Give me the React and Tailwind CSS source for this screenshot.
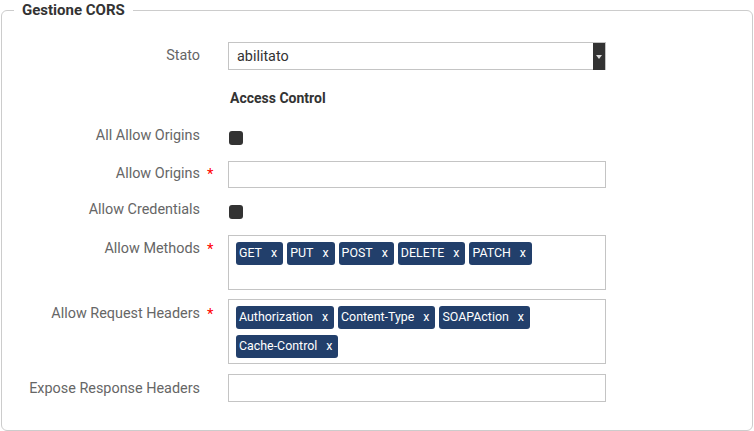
import { useState } from 'react'

const methods = ['GET', 'PUT', 'POST', 'DELETE', 'PATCH']
const reqHeaders = ['Authorization', 'Content-Type', 'SOAPAction', 'Cache-Control']

function Label({ text, required, className = '' }) {
  return (
    <div className={`flex w-[214px] shrink-0 ${className}`}>
      <span className="w-[186px] text-right text-[14.4px] leading-5 text-[#666]">{text}</span>
      {required && <span className="ml-[7px] text-[15px] leading-5 text-[#f00]">*</span>}
    </div>
  )
}

function Tag({ children }) {
  return (
    <span className="flex h-[23px] items-center rounded-[3px] bg-[#223f6b] pl-[3px] pr-[6px] text-[12.4px] text-white">
      {children}
      <span className="ml-[9px]">x</span>
    </span>
  )
}

function Checkbox({ checked, onChange }) {
  return (
    <button
      type="button"
      onClick={onChange}
      className="ml-px mt-[7px] h-[14px] w-[14px] rounded-[3px] bg-[#333]"
      aria-pressed={checked}
    />
  )
}

export default function App() {
  const [allOrigins, setAllOrigins] = useState(false)
  const [credentials, setCredentials] = useState(false)

  return (
    <div className="h-[431px] w-[754px] bg-white font-['Roboto',sans-serif]">
      <fieldset className="ml-px mr-[1px] h-[431px] rounded-[6px] border border-[#ccc] px-[12px]">
        <legend className="px-2 text-[15px] font-bold leading-5 text-[#333]">Gestione CORS</legend>

        <div className="mt-[22px] flex">
          <Label text="Stato" className="pt-[4px]" />
          <div className="relative h-[28px] w-[378px] border border-[#c4c4c4]">
            <span className="pl-[8px] text-[14.4px] leading-[27px] text-[#333]">abilitato</span>
            <div className="absolute right-0 top-0 flex h-[27px] w-[12px] items-center justify-center bg-[#333]">
              <svg width="6" height="4" viewBox="0 0 6 4"><path d="M0 0h6L3 4z" fill="#ddd" /></svg>
            </div>
          </div>
        </div>

        <div className="mt-[18px] flex">
          <div className="w-[216px] shrink-0" />
          <span className="text-[14px] font-bold leading-5 text-[#333]">Access Control</span>
        </div>

        <div className="mt-[16px] flex items-start">
          <Label text="All Allow Origins" className="pt-[2px]" />
          <Checkbox checked={allOrigins} onChange={() => setAllOrigins(!allOrigins)} />
        </div>

        <div className="mt-[15px] flex">
          <Label text="Allow Origins" required className="pt-[3px]" />
          <div className="h-[27px] w-[378px] border border-[#c4c4c4]" />
        </div>

        <div className="mt-[10px] flex items-start">
          <Label text="Allow Credentials" className="pt-[2px]" />
          <Checkbox checked={credentials} onChange={() => setCredentials(!credentials)} />
        </div>

        <div className="mt-[15px] flex">
          <Label text="Allow Methods" required className="pt-[4px]" />
          <div className="flex h-[55px] w-[378px] flex-wrap content-start gap-[4px] border border-[#c4c4c4] px-[7px] pt-[6px]">
            {methods.map(m => <Tag key={m}>{m}</Tag>)}
          </div>
        </div>

        <div className="mt-[9px] flex">
          <Label text="Allow Request Headers" required className="pt-[5px]" />
          <div className="flex h-[65px] w-[378px] flex-wrap content-start gap-x-[4px] gap-y-[6px] border border-[#c4c4c4] px-[7px] pt-[6px]">
            {reqHeaders.map(h => <Tag key={h}>{h}</Tag>)}
          </div>
        </div>

        <div className="mt-[10px] flex">
          <Label text="Expose Response Headers" className="pt-[5px]" />
          <div className="h-[28px] w-[378px] border border-[#c4c4c4]" />
        </div>
      </fieldset>
    </div>
  )
}
